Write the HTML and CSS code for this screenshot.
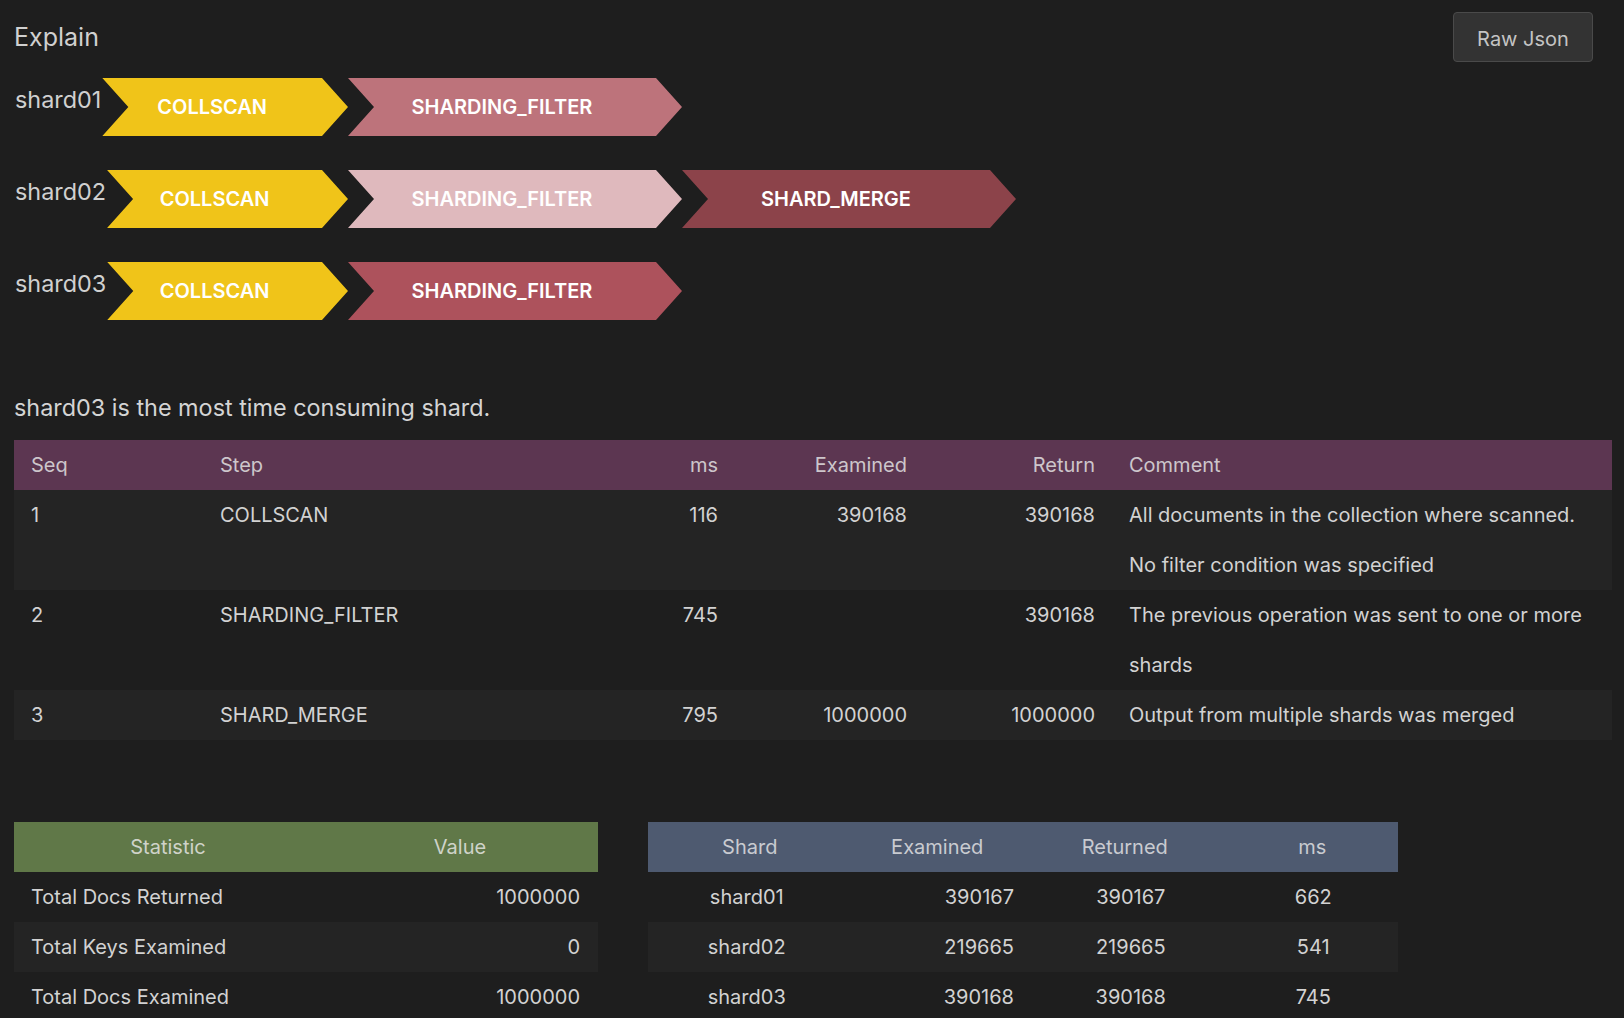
FILE: index.html
```html
<!DOCTYPE html>
<html>
<head>
<meta charset="utf-8">
<title>Explain</title>
<link rel="stylesheet" href="styles.css">
</head>
<body>
<div class="page">
  <div class="top">
    <h1 class="title">Explain</h1>
    <button class="raw">Raw Json</button>
  </div>

  <div class="stages">
    <div class="stage-row">
      <div class="first">
        <span class="shard-label">shard01</span>
        <div class="chev chev-first c-yellow">COLLSCAN</div>
      </div>
      <div class="chev c-rose">SHARDING_FILTER</div>
    </div>
    <div class="stage-row">
      <div class="first">
        <span class="shard-label">shard02</span>
        <div class="chev chev-first c-yellow">COLLSCAN</div>
      </div>
      <div class="chev c-pink">SHARDING_FILTER</div>
      <div class="chev c-wine">SHARD_MERGE</div>
    </div>
    <div class="stage-row">
      <div class="first">
        <span class="shard-label">shard03</span>
        <div class="chev chev-first c-yellow">COLLSCAN</div>
      </div>
      <div class="chev c-red">SHARDING_FILTER</div>
    </div>
  </div>

  <p class="summary">shard03 is the most time consuming shard.</p>

  <table class="steps">
    <colgroup>
      <col class="w-seq"><col class="w-step"><col class="w-num"><col class="w-num"><col class="w-ret"><col class="w-comment">
    </colgroup>
    <thead>
      <tr><th>Seq</th><th>Step</th><th class="r">ms</th><th class="r">Examined</th><th class="r">Return</th><th>Comment</th></tr>
    </thead>
    <tbody>
      <tr><td>1</td><td>COLLSCAN</td><td class="r">116</td><td class="r">390168</td><td class="r">390168</td><td>All documents in the collection where scanned.<br>No filter condition was specified</td></tr>
      <tr><td>2</td><td>SHARDING_FILTER</td><td class="r">745</td><td class="r"></td><td class="r">390168</td><td>The previous operation was sent to one or more<br>shards</td></tr>
      <tr><td>3</td><td>SHARD_MERGE</td><td class="r">795</td><td class="r">1000000</td><td class="r">1000000</td><td>Output from multiple shards was merged</td></tr>
    </tbody>
  </table>

  <div class="bottom">
    <table class="stats">
      <thead><tr><th>Statistic</th><th>Value</th></tr></thead>
      <tbody>
        <tr><td>Total Docs Returned</td><td class="r">1000000</td></tr>
        <tr><td>Total Keys Examined</td><td class="r">0</td></tr>
        <tr><td>Total Docs Examined</td><td class="r">1000000</td></tr>
      </tbody>
    </table>
    <table class="shards">
      <thead><tr><th>Shard</th><th>Examined</th><th>Returned</th><th>ms</th></tr></thead>
      <tbody>
        <tr><td class="sname">shard01</td><td class="sexam">390167</td><td class="sret">390167</td><td class="sms">662</td></tr>
        <tr><td class="sname">shard02</td><td class="sexam">219665</td><td class="sret">219665</td><td class="sms">541</td></tr>
        <tr><td class="sname">shard03</td><td class="sexam">390168</td><td class="sret">390168</td><td class="sms">745</td></tr>
      </tbody>
    </table>
  </div>
</div>
</body>
</html>
```

FILE: styles.css
```css
html, body {
  margin: 0;
  padding: 0;
  background: #1e1e1e;
  height: 100%;
  overflow: hidden;
}
body {
  font-family: "Inter", "Roboto", "Liberation Sans", sans-serif;
  color: #d2d2d2;
}
.page {
  padding: 12px 12px 0 14px;
}
.top {
  display: flex;
  justify-content: space-between;
  align-items: flex-start;
}
.title {
  margin: 0;
  font-size: 25px;
  font-weight: 400;
  line-height: 50px;
  color: #d0d0d0;
}
.raw {
  width: 140px;
  height: 50px;
  margin-right: 19px;
  padding: 3px 0 0;
  background: #333333;
  border: 1px solid #4a4a4a;
  border-radius: 4px;
  color: #c4c4c4;
  font-family: inherit;
  font-size: 20px;
}
.stages {
  margin-top: 16px;
  display: flex;
  flex-direction: column;
  gap: 34px;
}
.stage-row {
  display: flex;
  height: 58px;
}
.first {
  width: 334px;
  display: flex;
  flex-shrink: 0;
}
.shard-label {
  font-size: 23.4px;
  line-height: 26px;
  padding-top: 9px;
  padding-left: 1px;
  color: #d0d0d0;
}
.chev {
  width: 334px;
  height: 58px;
  flex-shrink: 0;
  box-sizing: border-box;
  padding-right: 26px;
  display: flex;
  align-items: center;
  justify-content: center;
  color: #ffffff;
  font-size: 20px;
  font-weight: 600;
  clip-path: polygon(0 0, calc(100% - 26px) 0, 100% 50%, calc(100% - 26px) 100%, 0 100%, 26px 50%);
}
.chev-first {
  flex: 1;
  width: auto;
  margin-left: 1px;
}
.c-yellow { background: #f0c419; }
.c-rose { background: #bd737b; }
.c-pink { background: #dfb9bd; }
.c-red { background: #ad525c; }
.c-wine { background: #8c434a; }

.summary {
  margin: 75px 0 19px;
  font-size: 23.4px;
  line-height: 26px;
  color: #d4d4d4;
}

table {
  border-collapse: collapse;
  table-layout: fixed;
  font-size: 20px;
}
th {
  font-weight: 400;
}
.steps {
  width: 1598px;
}
.w-seq { width: 189px; }
.w-step { width: 343px; }
.w-num { width: 189px; }
.w-ret { width: 188px; }
.w-comment { width: 500px; }
.steps th, .steps td {
  line-height: 50px;
  padding: 0 17px;
  text-align: left;
  vertical-align: top;
  white-space: nowrap;
}
.steps th { background: #5c3651; color: #cdc6cb; }
.steps .r { text-align: right; }
.steps tbody tr:nth-child(odd) { background: #242424; }

.bottom {
  margin-top: 82px;
  display: flex;
  gap: 50px;
  align-items: flex-start;
}
.stats { width: 584px; }
.shards { width: 750px; }
.bottom th, .bottom td {
  line-height: 50px;
  padding: 0 0 0 16px;
  text-align: center;
  white-space: nowrap;
}
.stats th { background: #607848; color: #cfd3c9; }
.shards th { background: #4e5a70; color: #c9cbd0; }
.bottom tbody tr:nth-child(even) { background: #242424; }
.stats td { text-align: left; padding: 0 17px; }
.stats td.r { text-align: right; padding-right: 18px; }
.shards td.sname { padding-left: 10px; }
.shards td.sexam { text-align: right; padding-right: 9px; }
.shards td.sret { padding-left: 28px; }
.shards td.sms { padding-left: 18px; }
```
